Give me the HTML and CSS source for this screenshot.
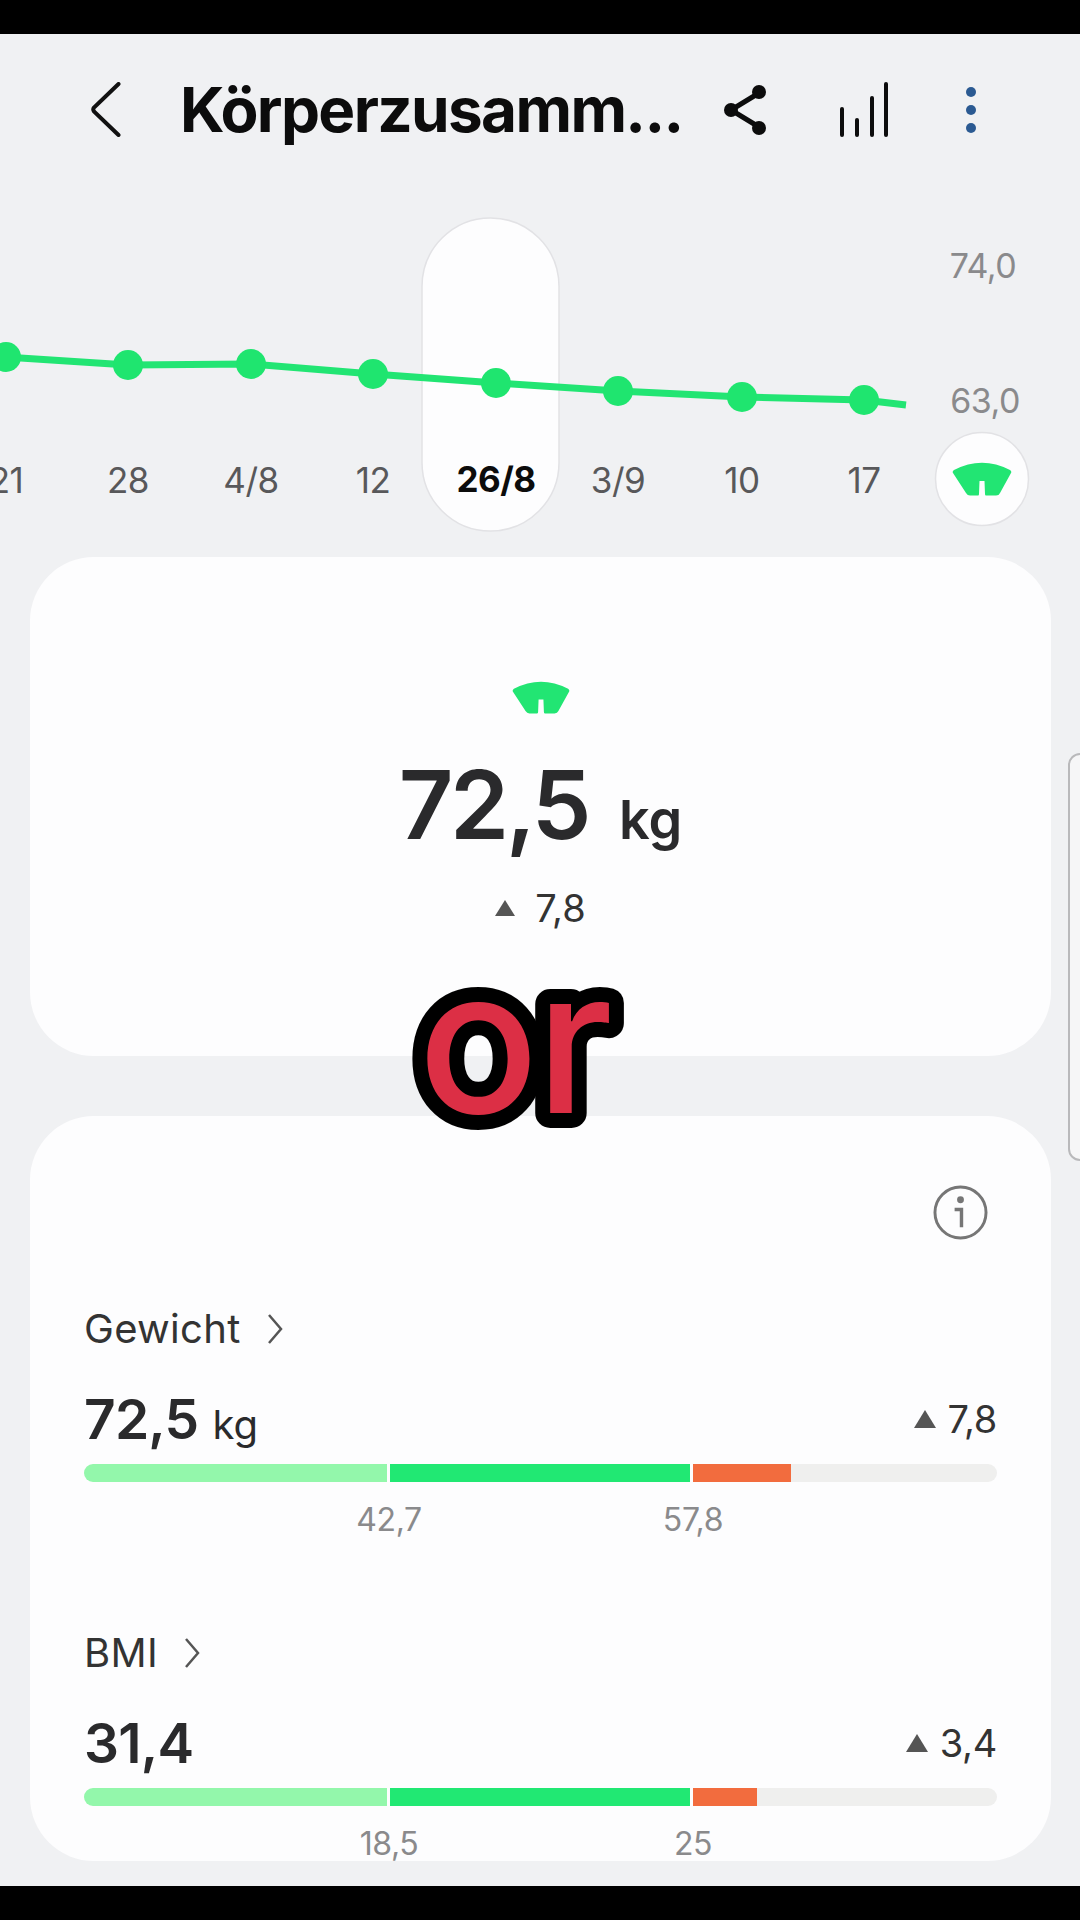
FILE: index.html
```html
<!DOCTYPE html>
<html lang="de">
<head>
    <meta charset="UTF-8">
    <meta name="viewport" content="width=device-width, initial-scale=1.0">
    <title>Körperzusammensetzung</title>
    <link rel="stylesheet" href="styles.css">
</head>
<body>
    <svg class="defs" width="0" height="0">
        <symbol id="scale" viewBox="0 0 60 35">
            <path d="M2 8Q30 -6.5 58 8Q60 9.5 59 11L48 31Q47 33.5 44 33.5L34 33.5Q33 33.5 33 32L32.5 19L27.5 19L27 32Q27 33.5 26 33.5L18 33.5Q15.5 33.5 14 31L1 11Q0 9.5 2 8Z"/>
        </symbol>
    </svg>

    <div class="screen">
        <header class="topbar">
            <svg class="icon-back" viewBox="0 0 30 55">
                <path d="M27.5 2L3 25.5Q1.5 27.5 3 29.5L27.5 53"/>
            </svg>
            <h1 class="title">Körperzusamm...</h1>
            <svg class="icon-share" viewBox="0 0 45 50">
                <path class="share-line" d="M36 8L8 25L36 42"/>
                <circle cx="8" cy="25" r="7"/>
                <circle cx="36" cy="7" r="7"/>
                <circle cx="36" cy="43" r="7"/>
            </svg>
            <svg class="icon-bars" viewBox="0 0 50 56">
                <rect x="1" y="25" width="4" height="30" rx="2"/>
                <rect x="16" y="36" width="4" height="19" rx="2"/>
                <rect x="31" y="14" width="4" height="41" rx="2"/>
                <rect x="45" y="0" width="4" height="55" rx="2"/>
            </svg>
            <div class="icon-more"><i></i><i></i><i></i></div>
        </header>

        <section class="chart">
            <svg class="chart-svg" viewBox="0 0 1080 357">
                <rect class="pill" x="422" y="18" width="137" height="313" rx="68.5"/>
                <polyline class="line" points="5,157 128,165 251,164 373,174 496,183 618,191 742,197 864,200 906,205"/>
                <g class="dots">
                    <circle cx="6" cy="157" r="15"/>
                    <circle cx="128" cy="165" r="15"/>
                    <circle cx="251" cy="164" r="15"/>
                    <circle cx="373" cy="174" r="15"/>
                    <circle cx="496" cy="183" r="15"/>
                    <circle cx="618" cy="191" r="15"/>
                    <circle cx="742" cy="197" r="15"/>
                    <circle cx="864" cy="200" r="15"/>
                </g>
                <g class="dates">
                    <text x="6" y="293">21</text>
                    <text x="128" y="293">28</text>
                    <text x="251" y="293">4/8</text>
                    <text x="373" y="293">12</text>
                    <text class="date-on" x="496" y="292">26/8</text>
                    <text x="618" y="293">3/9</text>
                    <text x="742" y="293">10</text>
                    <text x="864" y="293">17</text>
                </g>
                <text class="axis" x="983" y="78">74,0</text>
                <text class="axis" x="985" y="213">63,0</text>
                <circle class="scale-btn" cx="982" cy="279" r="46.5"/>
                <use class="scale-mark" href="#scale" x="952" y="262" width="60" height="35"/>
            </svg>
        </section>

        <section class="card card-main">
            <svg class="main-scale" viewBox="0 0 60 35"><use href="#scale"/></svg>
            <div class="main-value">72,5<span class="main-unit">kg</span></div>
            <div class="main-diff"><span class="tri tri-main"></span>7,8</div>
        </section>

        <section class="card card-list">
            <div class="info-row">
                <svg class="icon-info" viewBox="0 0 56 56">
                    <circle cx="28" cy="28" r="26"/>
                    <path d="M22 25H29V43"/>
                    <circle class="info-dot" cx="28" cy="15" r="3.5"/>
                </svg>
            </div>

            <div class="metric">
                <div class="metric-name">Gewicht
                    <svg class="chev" viewBox="0 0 16 30"><path d="M2 1L14 15L2 29"/></svg>
                </div>
                <div class="metric-row">
                    <div class="metric-value">72,5<span class="metric-unit">kg</span></div>
                    <div class="metric-diff"><span class="tri"></span>7,8</div>
                </div>
                <div class="bar">
                    <span class="seg seg-low"></span>
                    <span class="seg seg-ok"></span>
                    <span class="seg seg-high" style="width: 98px"></span>
                    <span class="seg seg-rest"></span>
                </div>
                <div class="ticks"><span>42,7</span><span>57,8</span></div>
            </div>

            <div class="metric metric-bmi">
                <div class="metric-name">BMI
                    <svg class="chev" viewBox="0 0 16 30"><path d="M2 1L14 15L2 29"/></svg>
                </div>
                <div class="metric-row">
                    <div class="metric-value">31,4</div>
                    <div class="metric-diff"><span class="tri"></span>3,4</div>
                </div>
                <div class="bar">
                    <span class="seg seg-low"></span>
                    <span class="seg seg-ok"></span>
                    <span class="seg seg-high" style="width: 64px"></span>
                    <span class="seg seg-rest"></span>
                </div>
                <div class="ticks"><span>18,5</span><span>25</span></div>
            </div>
        </section>

        <!-- edge panel handle -->
        <div class="edge-handle"></div>

        <!-- caption over the app -->
        <svg class="caption" viewBox="0 0 240 175">
            <text x="19" y="145">or</text>
        </svg>
    </div>
</body>
</html>
```

FILE: styles.css
```css
* {
    box-sizing: border-box;
}
html, body {
    margin: 0;
    padding: 0;
}
body {
    width: 1080px;
    height: 1920px;
    padding: 34px 0;
    overflow: hidden;
    background-color: #000;
    font-family: Inter, "Liberation Sans", sans-serif;
    color: #2a2a2c;
}
.defs {
    display: block;
    height: 0;
}
.screen {
    position: relative;
    height: 1852px;
    overflow: hidden;
    background-color: #f0f1f3;
}

/* top bar */
.topbar {
    display: flex;
    align-items: center;
    height: 166px;
    padding: 0 0 15px 91px;
}
.icon-back {
    width: 30px;
    height: 55px;
}
.icon-back path {
    fill: none;
    stroke: #111;
    stroke-width: 4;
    stroke-linecap: round;
}
.title {
    width: 543px;
    margin: 0 0 0 59px;
    font-size: 62px;
    font-weight: 700;
    line-height: 72px;
    letter-spacing: -1.65px;
    color: #0c0c0c;
    white-space: nowrap;
}
.icon-share {
    width: 45px;
    height: 50px;
    fill: #0c0c0c;
}
.share-line {
    fill: none;
    stroke: #0c0c0c;
    stroke-width: 5;
}
.icon-bars {
    width: 50px;
    height: 56px;
    margin-left: 71px;
    fill: #0c0c0c;
}
.icon-more {
    display: flex;
    flex-direction: column;
    gap: 8px;
    margin-left: 77px;
}
.icon-more i {
    display: block;
    width: 10px;
    height: 10px;
    border-radius: 50%;
    background-color: #2b5a92;
}

/* weight chart */
.chart {
    height: 357px;
}
.chart-svg {
    display: block;
    width: 1080px;
    height: 357px;
}
.pill, .scale-btn {
    fill: #fdfdfe;
    stroke: #e2e2e5;
    stroke-width: 1.5;
}
.line {
    fill: none;
    stroke: #22e573;
    stroke-width: 7;
    stroke-linejoin: round;
}
.dots {
    fill: #1fe56f;
}
.dates text {
    font-size: 35px;
    letter-spacing: -0.5px;
    fill: #58585a;
    text-anchor: middle;
}
.dates .date-on {
    font-weight: 700;
    fill: #0c0c0c;
}
.axis {
    font-size: 34px;
    letter-spacing: -0.5px;
    fill: #8a8a8c;
    text-anchor: middle;
}
.scale-mark {
    fill: #22e573;
}

/* cards */
.card {
    margin: 0 29px 0 30px;
    background-color: #fdfdfe;
    border-radius: 64px;
}
.card-main {
    display: flex;
    flex-direction: column;
    align-items: center;
    height: 499px;
    padding-top: 124px;
}
.main-scale {
    width: 58px;
    height: 34px;
    fill: #22e573;
}
.main-value {
    display: flex;
    align-items: baseline;
    margin-top: 32px;
    font-size: 95px;
    font-weight: 600;
    line-height: 115px;
    letter-spacing: -3.5px;
}
.main-unit {
    margin-left: 31px;
    font-size: 54px;
    letter-spacing: 0;
}
.main-diff {
    display: flex;
    align-items: center;
    margin-top: 9px;
    font-size: 38px;
    line-height: 44px;
    color: #333;
}
.tri {
    width: 0;
    height: 0;
    margin-right: 12px;
    border-left: 11px solid transparent;
    border-right: 11px solid transparent;
    border-bottom: 18px solid #555;
}
.tri-main {
    margin-right: 20px;
    border-left-width: 10px;
    border-right-width: 10px;
    border-bottom-width: 16px;
}
.card-list {
    height: 745px;
    margin-top: 60px;
    padding: 69px 54px 0;
    overflow: hidden;
}
.info-row {
    display: flex;
    justify-content: flex-end;
    margin-right: 9px;
}
.icon-info {
    width: 55px;
    height: 55px;
}
.icon-info circle {
    fill: none;
    stroke: #767676;
    stroke-width: 3;
}
.icon-info path {
    fill: none;
    stroke: #767676;
    stroke-width: 3.5;
}
.icon-info .info-dot {
    fill: #767676;
    stroke: none;
}

/* one metric with its range bar */
.metric {
    margin-top: 66px;
}
.metric-bmi {
    margin-top: 90px;
}
.metric-name {
    display: flex;
    align-items: center;
    gap: 26px;
    font-size: 40px;
    line-height: 46px;
    letter-spacing: 0.3px;
    color: #333;
}
.chev {
    width: 16px;
    height: 30px;
}
.chev path {
    fill: none;
    stroke: #555;
    stroke-width: 2.5;
}
.metric-row {
    display: flex;
    justify-content: space-between;
    align-items: flex-start;
    margin-top: 34px;
    line-height: 66px;
}
.metric-value {
    font-size: 55px;
    font-weight: 600;
    letter-spacing: -0.8px;
}
.metric-unit {
    margin-left: 14px;
    font-size: 40px;
    font-weight: 400;
    line-height: 1;
    letter-spacing: 0;
}
.metric-diff {
    display: flex;
    align-items: center;
    font-size: 38px;
    letter-spacing: -0.3px;
    color: #333;
}
.bar {
    display: flex;
    gap: 3px;
    height: 18px;
    margin-top: 12px;
    border-radius: 9px;
    overflow: hidden;
}
.seg-low {
    width: 303px;
    background-color: #93f7ab;
}
.seg-ok {
    width: 300px;
    background-color: #21e873;
}
.seg-high {
    background-color: #f26c3e;
}
.seg-rest {
    flex: 1;
    margin-left: -3px;
    background-color: #efefee;
}
.ticks {
    display: flex;
    gap: 184px;
    margin-top: 18px;
    padding-left: 245px;
    font-size: 32px;
    line-height: 40px;
    letter-spacing: -0.4px;
    color: #8a8a8c;
}
.ticks span {
    width: 120px;
    text-align: center;
}

.edge-handle {
    position: absolute;
    top: 719px;
    right: -20px;
    width: 32px;
    height: 408px;
    background-color: #f6f6f7;
    border: 2px solid #b9b9bb;
    border-radius: 12px;
}
.caption {
    position: absolute;
    top: 934px;
    left: 399px;
    width: 240px;
    height: 175px;
}
.caption text {
    font-size: 200px;
    font-weight: 550;
    letter-spacing: -3px;
    fill: #dc2f45;
    stroke: #000;
    stroke-width: 30;
    stroke-linejoin: round;
    paint-order: stroke fill;
}
```
